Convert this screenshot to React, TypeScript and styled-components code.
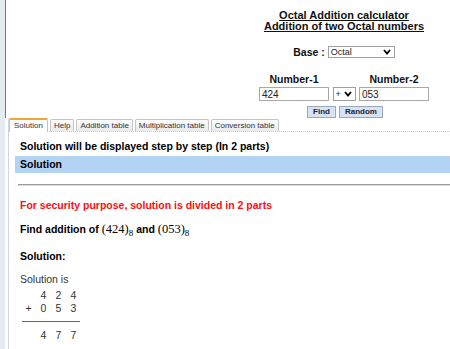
import React from "react";
import styled, { createGlobalStyle } from "styled-components";

const GlobalStyle = createGlobalStyle`
  html, body {
    margin: 0;
    padding: 0;
    background: #fff;
  }
  body {
    font-family: "Liberation Sans", Arial, sans-serif;
    color: #000;
  }
`;

const tabs = [
  "Solution",
  "Help",
  "Addition table",
  "Multiplication table",
  "Conversion table",
];

const rows = [
  ["", "4", "2", "4"],
  ["+", "0", "5", "3"],
];

const Chevron = () => (
  <svg width="8" height="6" viewBox="0 0 8 6">
    <path d="M1 1 L4 4.5 L7 1" fill="none" stroke="#000" strokeWidth="1.8" />
  </svg>
);

function App() {
  return (
    <Page>
      <GlobalStyle />
      <Sidebar />
      <Main>
        <Top>
          <HeaderCol>
            <Title>Octal Addition calculator</Title>
            <Title>Addition of two Octal numbers</Title>
            <BaseRow>
              <Label>Base :</Label>
              <SelectBox width={67}>
                <span>Octal</span>
                <Chevron />
              </SelectBox>
            </BaseRow>
            <NumberGrid>
              <Label>Number-1</Label>
              <span />
              <Label>Number-2</Label>
              <Field readOnly value="424" />
              <SelectBox width={23}>
                <span>+</span>
                <Chevron />
              </SelectBox>
              <Field readOnly value="053" />
            </NumberGrid>
            <ButtonRow>
              <Button>Find</Button>
              <Button>Random</Button>
            </ButtonRow>
          </HeaderCol>
        </Top>
        <TabArea>
          <TabList>
            {tabs.map((t, i) => (
              <Tab key={t} active={i === 0}>
                {t}
              </Tab>
            ))}
          </TabList>
          <Panel>
            <Heading>Solution will be displayed step by step (In 2 parts)</Heading>
            <SectionBar>Solution</SectionBar>
            <Rule />
            <Warning>For security purpose, solution is divided in 2 parts</Warning>
            <FindLine>
              Find addition of <Math>(424)</Math>
              <Sub>8</Sub> and <Math>(053)</Math>
              <Sub>8</Sub>
            </FindLine>
            <SubHeading>Solution:</SubHeading>
            <Plain>Solution is</Plain>
            <Digits>
              {rows.map((r, i) => (
                <DigitRow key={i}>
                  {r.map((c, j) => (
                    <Cell key={j}>{c}</Cell>
                  ))}
                </DigitRow>
              ))}
            </Digits>
            <SumLine />
            <DigitRow>
              <Cell />
              <Cell>4</Cell>
              <Cell>7</Cell>
              <Cell>7</Cell>
            </DigitRow>
          </Panel>
        </TabArea>
      </Main>
    </Page>
  );
}

const Page = styled.div`
  display: flex;
  width: 450px;
  height: 349px;
  overflow: hidden;
`;

const Sidebar = styled.div`
  width: 5px;
  background: #e4ebf3;
  flex-shrink: 0;
`;

const Main = styled.div`
  flex: 1;
  display: flex;
  flex-direction: column;
`;

const Top = styled.div`
  height: 118px;
  border-left: 1px solid #56809c;
  display: flex;
  justify-content: flex-end;
`;

const HeaderCol = styled.div`
  width: 212px;
  padding-top: 10px;
  display: flex;
  flex-direction: column;
  align-items: center;
`;

const Title = styled.div`
  font-size: 11px;
  line-height: 11px;
  font-weight: bold;
  text-decoration: underline;
  color: #111;
`;

const Label = styled.span`
  font-size: 10.5px;
  line-height: 12px;
  font-weight: bold;
  color: #111;
  text-align: center;
`;

const BaseRow = styled.div`
  display: flex;
  align-items: center;
  gap: 3px;
  margin-top: 14px;
  height: 12px;
`;

const SelectBox = styled.div<{ width: number }>`
  box-sizing: border-box;
  width: ${(p) => p.width}px;
  height: ${(p) => (p.width > 40 ? 12 : 14)}px;
  border: 1px solid #a0a0a0;
  background: #fff;
  display: flex;
  align-items: center;
  justify-content: space-between;
  padding: 0 3px 0 2px;
  font-size: 9px;
  color: #222;
`;

const NumberGrid = styled.div`
  display: grid;
  grid-template-columns: 70px 23px 70px;
  column-gap: 3.5px;
  row-gap: 2px;
  align-items: center;
  margin-top: 15px;
`;

const Field = styled.input`
  box-sizing: border-box;
  width: 70px;
  height: 14px;
  border: 1px solid #a9a9a9;
  padding: 0 2px;
  margin: 0;
  font-family: "Liberation Sans", Arial, sans-serif;
  font-size: 10px;
  color: #222;
  outline: none;
`;

const ButtonRow = styled.div`
  display: flex;
  gap: 3px;
  margin-top: 5px;
  margin-left: 2px;
`;

const Button = styled.button`
  box-sizing: border-box;
  height: 12px;
  padding: 0 5px;
  border: 1px solid #9aa9ba;
  background: #d7e3f0;
  font-family: "Liberation Sans", Arial, sans-serif;
  font-size: 8px;
  font-weight: bold;
  color: #223;
  line-height: 10px;
`;

const TabArea = styled.div`
  flex: 1;
  margin-left: 3px;
  border-left: 1px solid #cdd6df;
`;

const TabList = styled.div`
  display: flex;
  align-items: flex-end;
  gap: 2px;
  height: 13px;
  border-bottom: 1px dotted #c8c8c8;
`;

const Tab = styled.div<{ active?: boolean }>`
  box-sizing: border-box;
  height: ${(p) => (p.active ? 14 : 12)}px;
  margin-bottom: ${(p) => (p.active ? -1 : 0)}px;
  padding: 0 ${(p) => (p.active ? 4 : 3)}px;
  border: 1px solid #c4c4c4;
  border-bottom: none;
  border-top: ${(p) => (p.active ? "2px solid #f2a33a" : "1px solid #c4c4c4")};
  border-radius: 2px 2px 0 0;
  background: ${(p) =>
    p.active ? "#fff" : "linear-gradient(#fdfdfd, #eaeaea)"};
  font-size: 8px;
  line-height: 11px;
  color: #333;
  white-space: nowrap;
`;

const Panel = styled.div`
  padding-left: 11px;
`;

const Heading = styled.div`
  margin-top: 8px;
  font-size: 10.5px;
  line-height: 13px;
  font-weight: bold;
`;

const SectionBar = styled.div`
  margin: 3px 0 0 -5px;
  padding-left: 5px;
  height: 16px;
  line-height: 15px;
  border-top: 1px dotted #cfcfcf;
  background: #b3d3f4;
  font-size: 10.5px;
  font-weight: bold;
`;

const Rule = styled.div`
  margin: 11px 0 0 -2px;
  border-top: 1px solid #9c9c9c;
  border-bottom: 1px solid #dcdcdc;
`;

const Warning = styled.div`
  margin-top: 13px;
  font-size: 10.5px;
  line-height: 13px;
  font-weight: bold;
  color: #fa1010;
`;

const FindLine = styled.div`
  margin-top: 9px;
  font-size: 10.5px;
  line-height: 16px;
  font-weight: bold;
`;

const Math = styled.span`
  font-family: "Liberation Serif", "Times New Roman", serif;
  font-weight: normal;
  font-size: 12.5px;
`;

const Sub = styled.sub`
  font-family: "Liberation Serif", "Times New Roman", serif;
  font-weight: normal;
  font-size: 9px;
  line-height: 0;
  vertical-align: -3px;
`;

const SubHeading = styled.div`
  margin-top: 13px;
  font-size: 10.5px;
  line-height: 13px;
  font-weight: bold;
`;

const Plain = styled.div`
  margin-top: 10px;
  font-size: 10.5px;
  line-height: 13px;
  color: #333;
`;

const Digits = styled.div`
  margin-top: 3px;
`;

const DigitRow = styled.div`
  display: grid;
  grid-template-columns: repeat(4, 15px);
  margin-left: 1px;
  height: 13px;
`;

const Cell = styled.span`
  text-align: center;
  font-size: 10.5px;
  line-height: 13px;
  color: #333;
`;

const SumLine = styled.div`
  width: 58px;
  margin: 6px 0 7px 2px;
  border-top: 1px solid #666;
`;

export default App;
